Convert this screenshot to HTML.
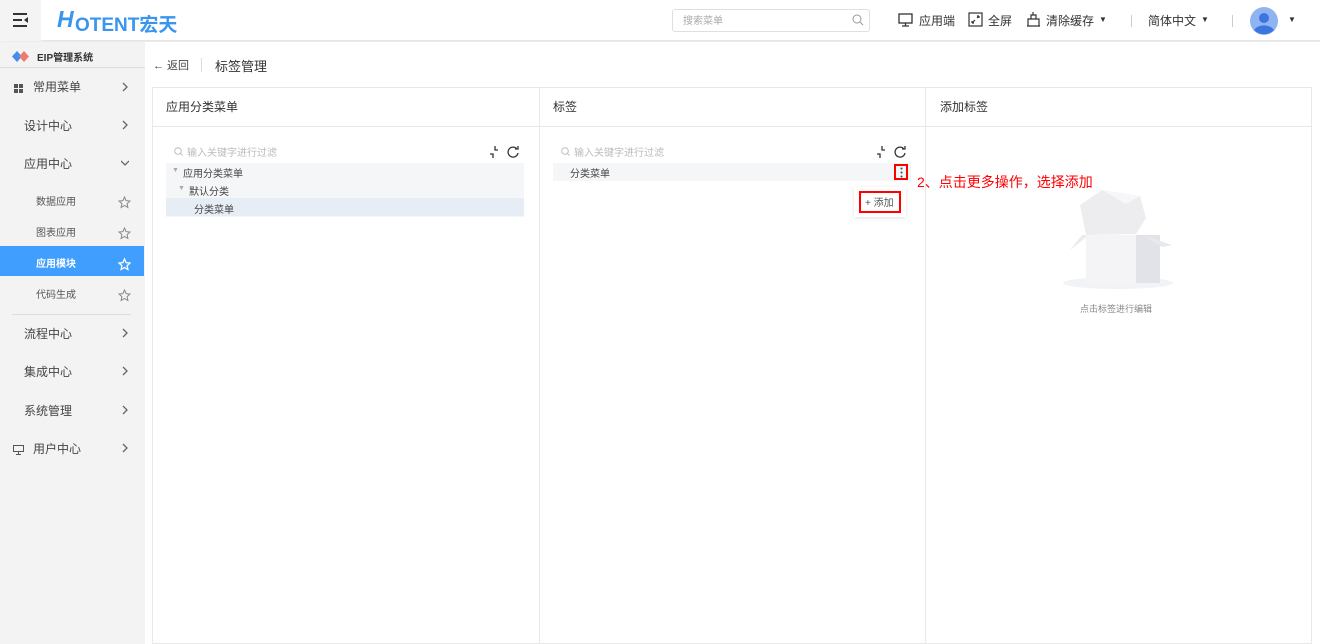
<!DOCTYPE html>
<html><head><meta charset="utf-8"><style>
*{margin:0;padding:0;box-sizing:border-box}
body{width:1320px;height:644px;overflow:hidden;background:#f4f4f5;font-family:"Liberation Sans","Noto Sans CJK SC",sans-serif;position:relative;color:#333}
.abs{position:absolute}
.t{position:absolute;white-space:nowrap;margin-top:-2px}
</style></head><body>
<!-- header -->
<div class="abs" style="left:0;top:0;width:1320px;height:41px;background:#fff;border-bottom:1px solid #e6e6e6;box-shadow:0 1px 3px rgba(0,0,0,.06)"></div>
<div class="abs" style="left:0;top:0;width:41px;height:41px;background:#f4f4f4"></div>
<svg class="abs" style="left:13px;top:13px" width="16" height="14"><path d="M0 1h14M0 7h9M0 13h14" stroke="#333" stroke-width="2"/><path d="M15 4l-4 3 4 3z" fill="#333"/></svg>
<div class="t" style="left:57px;top:8px;font-size:23px;font-weight:bold;color:#3a95ee;font-style:italic">H</div>
<div class="t" style="left:75px;top:12px;font-size:19px;font-weight:bold;color:#3a95ee">OTENT宏天</div>
<div class="abs" style="left:672px;top:9px;width:198px;height:23px;border:1px solid #dcdfe6;border-radius:3px"></div>
<div class="t" style="left:683px;top:14px;font-size:10px;color:#aaa">搜索菜单</div>
<svg class="abs" style="left:852px;top:14px" width="12" height="12"><circle cx="5" cy="5" r="4" fill="none" stroke="#999"/><path d="M8 8l3 3" stroke="#999"/></svg>
<svg class="abs" style="left:898px;top:13px" width="15" height="14"><rect x="1" y="1" width="13" height="9" fill="none" stroke="#333" stroke-width="1.3"/><path d="M7.5 10v3M4 13h7" stroke="#333" stroke-width="1.3"/></svg>
<div class="t" style="left:919px;top:14px;font-size:12px">应用端</div>
<svg class="abs" style="left:968px;top:12px" width="15" height="15"><rect x="1" y="1" width="13" height="13" fill="none" stroke="#333" stroke-width="1.2"/><path d="M4 11l3-3M9 6l2-2M4 11v-2M4 11h2M11 4h-2M11 4v2" stroke="#333" stroke-width="1.2"/></svg>
<div class="t" style="left:988px;top:14px;font-size:12px">全屏</div>
<svg class="abs" style="left:1026px;top:11px" width="15" height="16"><path d="M1 15h13M2 15V8h11v7M5 8V4h5v4M7 4V1" fill="none" stroke="#333" stroke-width="1.2"/></svg>
<div class="t" style="left:1046px;top:14px;font-size:12px">清除缓存</div>
<div class="t" style="left:1099px;top:17px;font-size:8px">▼</div>
<div class="abs" style="left:1131px;top:15px;width:1px;height:12px;background:#ccc"></div>
<div class="t" style="left:1148px;top:14px;font-size:12px">简体中文</div>
<div class="t" style="left:1201px;top:17px;font-size:8px">▼</div>
<div class="abs" style="left:1232px;top:15px;width:1px;height:12px;background:#ccc"></div>
<svg class="abs" style="left:1250px;top:7px" width="28" height="28"><circle cx="14" cy="14" r="14" fill="#8fb4f4"/><circle cx="14" cy="11" r="5" fill="#3c74e0"/><path d="M4 23a11 8 0 0 1 20 0a14 14 0 0 1-20 0z" fill="#3c74e0"/></svg>
<div class="t" style="left:1288px;top:17px;font-size:8px">▼</div>
<!-- sidebar -->
<div class="abs" style="left:0;top:42px;width:145px;height:602px;background:#f3f3f3"></div>
<svg class="abs" style="left:12px;top:51px" width="18" height="11"><path d="M0 5.5L5 0l5 5.5L5 11z" fill="#3f8ef0"/><path d="M7 5.5L12 0l5 5.5L12 11z" fill="#ee7a6c"/></svg>
<div class="t" style="left:37px;top:51px;font-size:10px;font-weight:bold">EIP管理系统</div>
<div class="abs" style="left:0;top:67px;width:145px;height:1px;background:#ddd"></div>
<svg class="abs" style="left:14px;top:84px" width="9" height="9"><rect width="4" height="4" fill="#555"/><rect x="5" width="4" height="4" fill="#555"/><rect y="5" width="4" height="4" fill="#555"/><rect x="5" y="5" width="4" height="4" fill="#555"/></svg>
<div class="t" style="left:33px;top:80px;font-size:12px;color:#444">常用菜单</div>
<div class="t" style="left:24px;top:119px;font-size:12px;color:#444">设计中心</div>
<div class="t" style="left:24px;top:157px;font-size:12px;color:#444">应用中心</div>
<div class="t" style="left:36px;top:195px;font-size:10px;color:#555">数据应用</div>
<div class="t" style="left:36px;top:226px;font-size:10px;color:#555">图表应用</div>
<div class="abs" style="left:0;top:246px;width:144px;height:30px;background:#409eff"></div>
<div class="t" style="left:36px;top:257px;font-size:10px;color:#fff;font-weight:bold">应用模块</div>
<div class="t" style="left:36px;top:288px;font-size:10px;color:#555">代码生成</div>
<svg class="abs" style="left:118px;top:196px" width="13" height="110" fill="none" stroke="#888" stroke-width="1"><g id="s"><path d="M6.5 1l1.6 3.6 3.9.4-2.9 2.6.8 3.9-3.4-2-3.4 2 .8-3.9L1 5l3.9-.4z"/></g><path transform="translate(0,31)" d="M6.5 1l1.6 3.6 3.9.4-2.9 2.6.8 3.9-3.4-2-3.4 2 .8-3.9L1 5l3.9-.4z"/><path transform="translate(0,62)" stroke="#fff" stroke-width="1.3" d="M6.5 1l1.6 3.6 3.9.4-2.9 2.6.8 3.9-3.4-2-3.4 2 .8-3.9L1 5l3.9-.4z"/><path transform="translate(0,93)" d="M6.5 1l1.6 3.6 3.9.4-2.9 2.6.8 3.9-3.4-2-3.4 2 .8-3.9L1 5l3.9-.4z"/></svg>
<div class="abs" style="left:12px;top:314px;width:119px;height:1px;background:#ddd"></div>
<div class="t" style="left:24px;top:327px;font-size:12px;color:#444">流程中心</div>
<div class="t" style="left:24px;top:365px;font-size:12px;color:#444">集成中心</div>
<div class="t" style="left:24px;top:404px;font-size:12px;color:#444">系统管理</div>
<svg class="abs" style="left:13px;top:445px" width="11" height="10"><rect x=".5" y=".5" width="10" height="6" fill="none" stroke="#555"/><path d="M5.5 7v2M3 9.5h5" stroke="#555"/></svg>
<div class="t" style="left:33px;top:442px;font-size:12px;color:#444">用户中心</div>
<svg class="abs" style="left:121px;top:82px" width="8" height="400" fill="none" stroke="#666" stroke-width="1.3"><path d="M2 1l4 4-4 4M2 39l4 4-4 4M2 247l4 4-4 4M2 285l4 4-4 4M2 324l4 4-4 4M2 362l4 4-4 4"/><path d="M0 79l4 4 4-4"/></svg>
<!-- content -->
<div class="abs" style="left:145px;top:42px;width:1175px;height:602px;background:#fff"></div>
<div class="t" style="left:153px;top:59px;font-size:11px;color:#444">← 返回</div>
<div class="abs" style="left:201px;top:58px;width:1px;height:14px;background:#ddd"></div>
<div class="t" style="left:215px;top:58px;font-size:13px;color:#333">标签管理</div>
<div class="abs" style="left:152px;top:87px;width:1160px;height:557px;border:1px solid #e8e8e8"></div>
<div class="abs" style="left:539px;top:87px;width:1px;height:557px;background:#e8e8e8"></div>
<div class="abs" style="left:925px;top:87px;width:1px;height:557px;background:#e8e8e8"></div>
<div class="abs" style="left:152px;top:126px;width:1160px;height:1px;background:#e8e8e8"></div>
<div class="t" style="left:166px;top:100px;font-size:12px">应用分类菜单</div>
<div class="t" style="left:553px;top:100px;font-size:12px">标签</div>
<div class="t" style="left:940px;top:100px;font-size:12px">添加标签</div>
<!-- left panel -->
<svg class="abs" style="left:174px;top:147px" width="9" height="9"><circle cx="4" cy="4" r="3.3" fill="none" stroke="#bbb"/><path d="M6.5 6.5l2 2" stroke="#bbb"/></svg>
<div class="t" style="left:187px;top:146px;font-size:10px;color:#bbb">输入关键字进行过滤</div>
<svg class="abs" style="left:489px;top:145px" width="32" height="14" fill="none" stroke="#333" stroke-width="1.3"><path d="M1 9h3v4M6 1v4h3"/><path d="M28 4a5 5 0 1 0 1 4M29 1v3h-3"/></svg>
<div class="abs" style="left:166px;top:163px;width:358px;height:54px;background:#f5f6f7"></div>
<div class="abs" style="left:166px;top:198px;width:358px;height:18px;background:#e6edf5"></div>
<div class="t" style="left:172px;top:169px;font-size:7px;color:#aaa">▼</div>
<div class="t" style="left:183px;top:167px;font-size:10px;color:#444">应用分类菜单</div>
<div class="t" style="left:178px;top:187px;font-size:7px;color:#aaa">▼</div>
<div class="t" style="left:189px;top:185px;font-size:10px;color:#444">默认分类</div>
<div class="t" style="left:194px;top:203px;font-size:10px;color:#444">分类菜单</div>
<!-- middle panel -->
<svg class="abs" style="left:561px;top:147px" width="9" height="9"><circle cx="4" cy="4" r="3.3" fill="none" stroke="#bbb"/><path d="M6.5 6.5l2 2" stroke="#bbb"/></svg>
<div class="t" style="left:574px;top:146px;font-size:10px;color:#bbb">输入关键字进行过滤</div>
<svg class="abs" style="left:876px;top:145px" width="32" height="14" fill="none" stroke="#333" stroke-width="1.3"><path d="M1 9h3v4M6 1v4h3"/><path d="M28 4a5 5 0 1 0 1 4M29 1v3h-3"/></svg>
<div class="abs" style="left:553px;top:163px;width:358px;height:18px;background:#f5f6f7"></div>
<div class="t" style="left:570px;top:167px;font-size:10px;color:#444">分类菜单</div>
<div class="abs" style="left:894px;top:164px;width:14px;height:16px;border:2px solid #f00"></div>
<svg class="abs" style="left:900px;top:167px" width="3" height="11"><circle cx="1.5" cy="1.5" r="1" fill="#444"/><circle cx="1.5" cy="5.5" r="1" fill="#444"/><circle cx="1.5" cy="9.5" r="1" fill="#444"/></svg>
<div class="abs" style="left:854px;top:187px;width:52px;height:30px;background:#fff;box-shadow:0 1px 4px rgba(0,0,0,.12)"></div>
<div class="abs" style="left:859px;top:191px;width:42px;height:22px;border:2px solid #f00"></div>
<div class="t" style="left:865px;top:196px;font-size:10px;color:#555">+ 添加</div>
<div class="t" style="left:917px;top:174px;font-size:14px;color:#f00">2、点击更多操作，选择添加</div>
<!-- right panel empty -->
<svg class="abs" style="left:1062px;top:178px" width="112" height="112">
<ellipse cx="56" cy="105" rx="55" ry="6" fill="#f2f3f6"/>
<path d="M8 72l12-15h7z" fill="#eaebef"/>
<rect x="24" y="57" width="56" height="48" fill="#f4f4f6"/>
<rect x="74" y="57" width="24" height="48" fill="#e2e3e8"/>
<path d="M80 57l30 10-10 2z" fill="#e8e9ed"/>
<path d="M18 27l22-15 38 6 6 22-10 16-50 1z" fill="#ededf0"/>
<path d="M40 12l38 6-14 8z" fill="#f7f7f9"/>
</svg>
<div class="t" style="left:1080px;top:304px;font-size:9px;color:#888">点击标签进行编辑</div>
</body></html>
